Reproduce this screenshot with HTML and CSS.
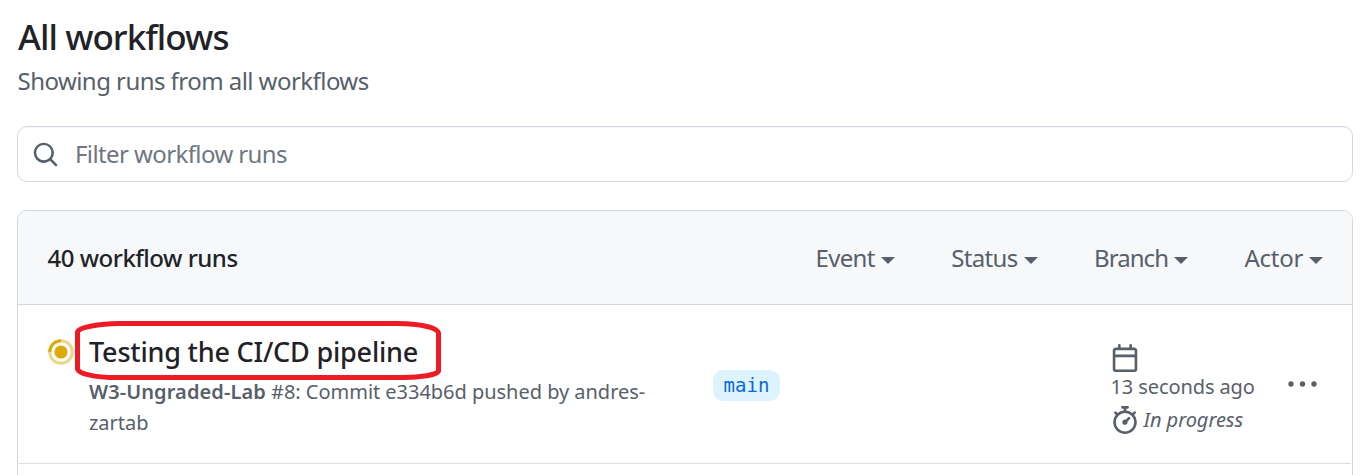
FILE: index.html
```html
<!DOCTYPE html>
<html lang="en">
<head>
<meta charset="utf-8">
<title>All workflows</title>
<link rel="stylesheet" href="styles.css">
</head>
<body>
<main class="page">
  <h1 class="title"><span>All workflows</span></h1>
  <p class="subtitle"><span>Showing runs from all workflows</span></p>
  <div class="search">
    <svg class="search-icon" viewBox="0 0 16 16" width="27" height="27"><path d="M10.68 11.74a6 6 0 0 1-7.922-8.982 6 6 0 0 1 8.982 7.922l3.04 3.04a.749.749 0 0 1-.326 1.275.749.749 0 0 1-.734-.215ZM11.5 7a4.499 4.499 0 1 0-8.997 0A4.499 4.499 0 0 0 11.5 7Z"/></svg>
    <span class="placeholder">Filter workflow runs</span>
  </div>
  <section class="box">
    <header class="box-header">
      <strong class="count">40 workflow runs</strong>
      <nav class="filters">
        <span class="filter event"><span>Event</span><i class="caret"></i></span>
        <span class="filter status"><span>Status</span><i class="caret"></i></span>
        <span class="filter branch-filter"><span>Branch</span><i class="caret"></i></span>
        <span class="filter actor"><span>Actor</span><i class="caret"></i></span>
      </nav>
    </header>
    <article class="run">
      <svg class="state" viewBox="0 0 26 26" width="26" height="26"><circle cx="13" cy="13" r="11.3" fill="none" stroke="#dbab0a" stroke-opacity=".5" stroke-width="3"/><path d="M1.7 13A11.3 11.3 0 0 1 13 1.7" fill="none" stroke="#dbab0a" stroke-width="3"/><circle cx="13" cy="13" r="6.6" fill="#dbab0a"/></svg>
      <div class="info">
        <h2 class="run-title"><span>Testing the CI/CD pipeline</span>
          <svg class="marker" viewBox="75 321 366 59" width="366" height="59"><path d="M77.5 332C79 327 100 324 119 323.5H397C420 324 437 327 438.5 333V371C437 375 420 377.5 404 377.5H110C95 377 79 374 77.5 369Z"/></svg>
        </h2>
        <p class="detail"><b>W3-Ungraded-Lab</b> <span>#8: Commit e334b6d pushed by andres-<br>zartab</span></p>
      </div>
      <div class="branch"><span class="label">main</span></div>
      <div class="meta">
        <svg class="calendar" viewBox="0 0 16 16" width="28" height="28"><path d="M4.75 0a.75.75 0 0 1 .75.75V2h5V.75a.75.75 0 0 1 1.5 0V2h1.25c.966 0 1.75.784 1.75 1.75v10.5A1.75 1.75 0 0 1 13.25 16H2.75A1.75 1.75 0 0 1 1 14.25V3.75C1 2.784 1.784 2 2.75 2H4V.75A.75.75 0 0 1 4.75 0ZM2.5 7.5v6.75c0 .138.112.25.25.25h10.5a.25.25 0 0 0 .25-.25V7.5Zm10.75-4H2.75a.25.25 0 0 0-.25.25V6h11V3.75a.25.25 0 0 0-.25-.25Z"/></svg>
        <span class="ago">13 seconds ago</span>
        <span class="progress"><svg viewBox="0 0 16 16" width="28" height="28"><path d="M5.75.75A.75.75 0 0 1 6.5 0h3a.75.75 0 0 1 0 1.5h-.75v1l-.001.041a6.724 6.724 0 0 1 3.464 1.435l.007-.006.75-.75a.749.749 0 0 1 1.275.326.749.749 0 0 1-.215.734l-.75.75-.006.007a6.75 6.75 0 1 1-10.548 0L2.72 5.03l-.75-.75a.751.751 0 0 1 .018-1.042.751.751 0 0 1 1.042-.018l.75.75.007.006A6.72 6.72 0 0 1 7.25 2.541V1.5H6.5a.75.75 0 0 1-.75-.75ZM8 14.5a5.25 5.25 0 1 0-.001-10.501A5.25 5.25 0 0 0 8 14.5Zm.389-6.7 1.33-1.33a.75.75 0 1 1 1.061 1.06L9.45 8.861A1.503 1.503 0 0 1 8 10.75a1.499 1.499 0 1 1 .389-2.95Z"/></svg><em>In progress</em></span>
      </div>
      <svg class="kebab" viewBox="0 0 30 6" width="30" height="6"><circle cx="3" cy="3" r="2.7"/><circle cx="14.5" cy="3" r="2.7"/><circle cx="26" cy="3" r="2.7"/></svg>
    </article>
  </section>
</main>
</body>
</html>
```
FILE: styles.css
```css
* { box-sizing: border-box; }
body { margin: 0; background: #fff; color: #1f2328; font-family: "Noto Sans", sans-serif; overflow: hidden; }
h1, h2, p { margin: 0; }
svg { display: block; fill: #57606a; flex: none; }
.page { height: 475px; padding: 11px 11px 0 17px; display: flex; flex-direction: column; overflow: hidden; }
.title { padding-left: 1px; font-size: 35px; line-height: 52px; font-weight: 540; letter-spacing: -.95px; white-space: nowrap; }
.subtitle { margin-top: 1px; padding-left: .5px; font-size: 24px; line-height: 34px; color: #57606a; letter-spacing: -.55px; white-space: nowrap; }
.search { margin-top: 28px; height: 56px; flex: none; border: 1px solid #d0d7de; border-radius: 10px; display: flex; align-items: center; padding-left: 13.5px; box-shadow: inset 0 1px 0 rgba(208, 215, 222, .2); }
.search-icon { margin-top: 1px; }
.placeholder { margin-left: 16.5px; font-size: 24px; line-height: 34px; color: #6e7781; letter-spacing: -.6px; white-space: nowrap; }
.box { margin-top: 28px; flex: none; height: 300px; border: 1px solid #d0d7de; border-radius: 10px; overflow: hidden; }
.box-header { height: 94px; background: #f6f8fa; border-bottom: 1px solid #d0d7de; display: flex; justify-content: space-between; align-items: center; padding: 0 29px 0 30px; }
.count { margin-left: -.5px; font-size: 24px; font-weight: 540; letter-spacing: -.5px; }
.filters { display: flex; gap: 56.5px; font-size: 24px; color: #57606a; }
.filter { display: flex; align-items: center; letter-spacing: -.6px; }
.event { letter-spacing: -.7px; }
.status { letter-spacing: -.65px; }
.branch-filter { letter-spacing: -.95px; }
.actor { letter-spacing: -.3px; }
.caret { margin: 5px 0 0 6px; border: 7px solid transparent; border-top-color: #57606a; border-bottom: 0; }
.run { position: relative; height: 159px; margin: 0 1px; border-bottom: 1px solid #d8dee4; display: flex; }
.state { margin: 34px 0 0 28.5px; }
.info { width: 624px; padding: 28px 0 0 15.5px; flex: none; }
.run-title { position: relative; font-size: 27px; line-height: 38px; font-weight: 540; letter-spacing: -.2px; white-space: nowrap; }
.marker { position: absolute; left: -14px; top: -12px; }
.marker path { fill: none; stroke: #ed1c24; stroke-width: 5; }
.detail { margin-top: 5px; font-size: 20px; line-height: 31px; color: #57606a; white-space: nowrap; letter-spacing: -.03px; }
.detail b { font-weight: 600; letter-spacing: .1px; }
.branch { width: 398px; padding-top: 65px; flex: none; }
.label { display: block; width: 67px; height: 31px; margin-left: 15.5px; border-radius: 10px; background: #ddf4ff; color: #0969da; font: 19px/31px "DejaVu Sans Mono", monospace; text-align: center; }
.meta { width: 160px; padding: 39px 0 0 15px; color: #57606a; font-size: 20px; display: flex; flex-direction: column; flex: none; white-space: nowrap; }
.ago { line-height: 30px; letter-spacing: -.1px; }
.progress { display: flex; align-items: center; gap: 5px; line-height: 36px; letter-spacing: -.05px; }
.kebab { margin: 76px 0 0 32px; }
```
